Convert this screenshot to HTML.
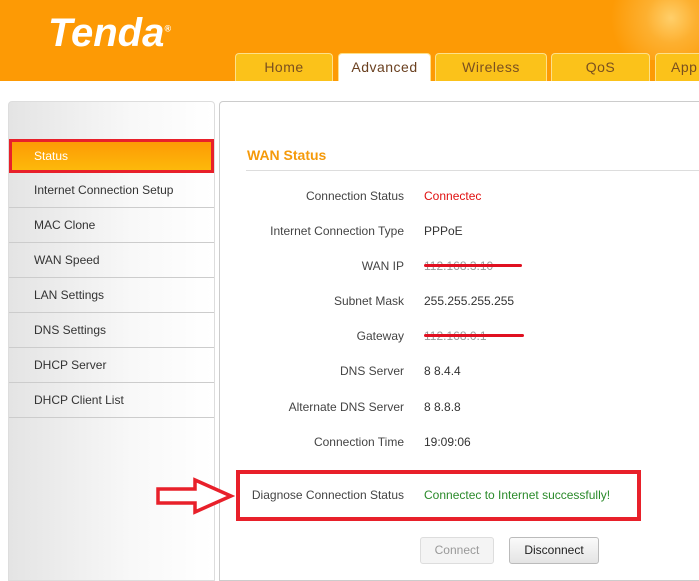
<!DOCTYPE html>
<html><head><style>
*{margin:0;padding:0;box-sizing:border-box}
body{width:699px;height:572px;overflow:hidden;background:#fff;font-family:"Liberation Sans",sans-serif;position:relative}
.hdr{position:absolute;left:0;top:0;width:699px;height:81px;background:#fd9a05}
.logo{position:absolute;left:48px;top:11px;color:#fff;font-size:40px;font-weight:bold;font-style:italic;letter-spacing:0px;transform:scaleX(1.0);transform-origin:left}
.tab{position:absolute;top:53px;height:28px;background:#fbc21a;border:1px solid #fde08a;border-bottom:none;border-radius:4px 4px 0 0;color:#7a5020;font-size:14px;text-align:center;line-height:26px;letter-spacing:0.5px}
.tab.on{background:#fff;color:#6a4020;top:53px}
.side{position:absolute;left:8px;top:101px;width:207px;height:480px;border:1px solid #ddd;border-radius:4px 4px 0 0;background:linear-gradient(90deg,#e4e4e4,#f8f8f8 60%,#fff)}
.item{position:absolute;left:9px;width:205px;height:35px;border-bottom:1px solid #ccc;font-size:12px;color:#333;padding-left:25px;line-height:34px}
.main{position:absolute;left:219px;top:101px;width:490px;height:480px;border:1px solid #ccc;border-radius:4px 0 0 0}
.lbl{position:absolute;width:404px;left:0;text-align:right;font-size:12px;color:#444}
.val{position:absolute;left:424px;font-size:12px;color:#333}
.strike{position:absolute;height:3px;background:#e01020;border-radius:2px}
.btn{position:absolute;top:537px;height:27px;border:1px solid #bbb;border-radius:3px;font-size:12px;text-align:center;line-height:25px}
</style></head><body>
<div class="hdr"><div class="logo">Tenda<sup style="font-size:9px">®</sup></div>
<div style="position:absolute;right:0;top:0;width:140px;height:60px;background:radial-gradient(circle at 80% 30%,#ffcf6a 0,#fdb030 25px,transparent 60px)"></div></div>
<div class="tab" style="left:235px;width:98px">Home</div>
<div class="tab on" style="left:338px;width:93px">Advanced</div>
<div class="tab" style="left:435px;width:112px">Wireless</div>
<div class="tab" style="left:551px;width:99px">QoS</div>
<div class="tab" style="left:655px;width:60px;text-align:left;padding-left:15px">App</div>
<div class="side"></div>
<div style="position:absolute;left:9px;top:139px;width:205px;height:34px;background:linear-gradient(#fd9a05,#fdb90a);border:3px solid #e8202a;color:#fff;font-size:12px;line-height:28px;padding-left:22px">Status</div>
<div class="item" style="top:173px">Internet Connection Setup</div>
<div class="item" style="top:208px">MAC Clone</div>
<div class="item" style="top:243px">WAN Speed</div>
<div class="item" style="top:278px">LAN Settings</div>
<div class="item" style="top:313px">DNS Settings</div>
<div class="item" style="top:348px">DHCP Server</div>
<div class="item" style="top:383px">DHCP Client List</div>
<div class="main"></div>
<div style="position:absolute;left:247px;top:147px;color:#f59a0a;font-size:14px;font-weight:bold">WAN Status</div>
<div style="position:absolute;left:246px;top:170px;width:453px;height:1px;background:#ddd"></div>
<div class="lbl" style="top:189px">Connection Status</div><div class="val" style="top:189px;color:#e01010">Connectec</div>
<div class="lbl" style="top:224px">Internet Connection Type</div><div class="val" style="top:224px">PPPoE</div>
<div class="lbl" style="top:259px">WAN IP</div><div class="val" style="top:259px;color:#999">112.168.3.10</div>
<div class="strike" style="left:424px;top:264px;width:98px"></div>
<div class="lbl" style="top:294px">Subnet Mask</div><div class="val" style="top:294px">255.255.255.255</div>
<div class="lbl" style="top:329px">Gateway</div><div class="val" style="top:329px;color:#999">112.168.0.1</div>
<div class="strike" style="left:424px;top:334px;width:100px"></div>
<div class="lbl" style="top:364px">DNS Server</div><div class="val" style="top:364px">8 8.4.4</div>
<div class="lbl" style="top:400px">Alternate DNS Server</div><div class="val" style="top:400px">8 8.8.8</div>
<div class="lbl" style="top:435px">Connection Time</div><div class="val" style="top:435px">19:09:06</div>
<div style="position:absolute;left:236px;top:470px;width:405px;height:51px;border:4px solid #e8202a"></div>
<div class="lbl" style="top:488px">Diagnose Connection Status</div><div class="val" style="top:488px;color:#2a8a2a">Connectec to Internet successfully!</div>
<svg style="position:absolute;left:155px;top:476px" width="80" height="40"><polygon points="3,13 40,13 40,4 76,20 40,36 40,27 3,27" fill="#fff" stroke="#e8202a" stroke-width="3.5"/></svg>
<div class="btn" style="left:420px;width:74px;color:#999;background:#f4f4f4;border-color:#ddd">Connect</div>
<div class="btn" style="left:509px;width:90px;color:#222;background:linear-gradient(#fafafa,#e4e4e4)">Disconnect</div>
</body></html>
